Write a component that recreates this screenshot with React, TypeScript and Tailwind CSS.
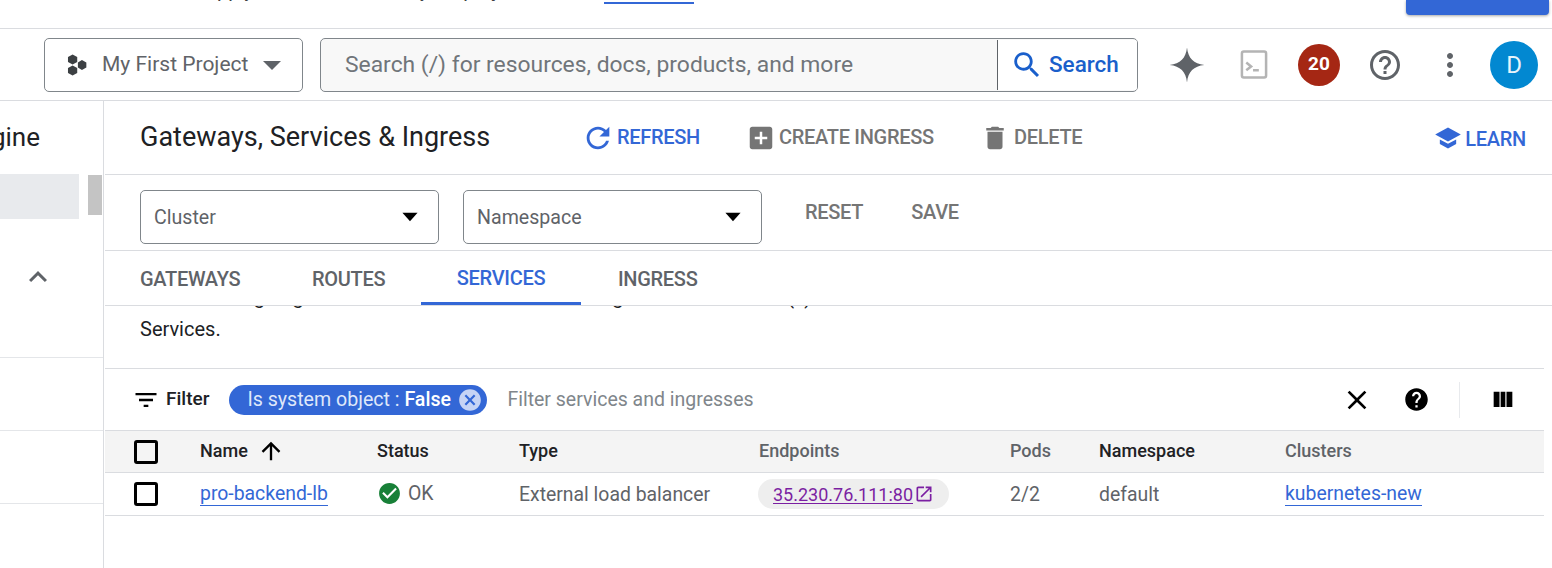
const font = { fontFamily: "Roboto, 'Liberation Sans', sans-serif" };

function Icon({ d, className }: { d: string; className: string }) {
	return (
		<svg viewBox="0 0 24 24" className={className} fill="currentColor">
			<path d={d} />
		</svg>
	);
}

const icons = {
	refresh: "M17.65 6.35C16.2 4.9 14.21 4 12 4c-4.42 0-7.99 3.58-7.99 8s3.57 8 7.99 8c3.73 0 6.84-2.55 7.73-6h-2.08c-.82 2.33-3.04 4-5.65 4-3.31 0-6-2.69-6-6s2.69-6 6-6c1.66 0 3.14.69 4.22 1.78L13 11h7V4l-2.35 2.35z",
	addBox: "M19 3H5c-1.11 0-2 .9-2 2v14c0 1.1.89 2 2 2h14c1.1 0 2-.9 2-2V5c0-1.1-.9-2-2-2zm-2 10h-4v4h-2v-4H7v-2h4V7h2v4h4v2z",
	trash: "M6 19c0 1.1.9 2 2 2h8c1.1 0 2-.9 2-2V7H6v12zM19 4h-3.5l-1-1h-5l-1 1H5v2h14V4z",
	school: "M5 13.18v4L12 21l7-3.82v-4L12 17l-7-3.82zM12 3L1 9l11 6 11-6-11-6z",
	search: "M15.5 14h-.79l-.28-.27C15.41 12.59 16 11.11 16 9.5 16 5.91 13.09 3 9.5 3S3 5.91 3 9.5 5.91 16 9.5 16c1.61 0 3.09-.59 4.23-1.57l.27.28v.79l5 4.99L20.49 19l-4.99-5zm-6 0C7.01 14 5 11.99 5 9.5S7.01 5 9.5 5 14 7.01 14 9.5 11.99 14 9.5 14z",
	helpOutline: "M11 18h2v-2h-2v2zm1-16C6.48 2 2 6.48 2 12s4.48 10 10 10 10-4.48 10-10S17.52 2 12 2zm0 18c-4.41 0-8-3.59-8-8s3.59-8 8-8 8 3.59 8 8-3.59 8-8 8zm0-14c-2.21 0-4 1.79-4 4h2c0-1.1.9-2 2-2s2 .9 2 2c0 2-3 1.75-3 5h2c0-2.25 3-2.5 3-5 0-2.21-1.79-4-4-4z",
	moreVert: "M12 8c1.1 0 2-.9 2-2s-.9-2-2-2-2 .9-2 2 .9 2 2 2zm0 2c-1.1 0-2 .9-2 2s.9 2 2 2 2-.9 2-2-.9-2-2-2zm0 6c-1.1 0-2 .9-2 2s.9 2 2 2 2-.9 2-2-.9-2-2-2z",
	filter: "M10 18h4v-2h-4v2zM3 6v2h18V6H3zm3 7h12v-2H6v2z",
	cancel: "M12 2C6.47 2 2 6.47 2 12s4.47 10 10 10 10-4.47 10-10S17.53 2 12 2zm5 13.59L15.59 17 12 13.41 8.41 17 7 15.59 10.59 12 7 8.41 8.41 7 12 10.59 15.59 7 17 8.41 13.41 12 17 15.59z",
	close: "M19 6.41L17.59 5 12 10.59 6.41 5 5 6.41 10.59 12 5 17.59 6.41 19 12 13.41 17.59 19 19 17.59 13.41 12z",
	help: "M12 2C6.48 2 2 6.48 2 12s4.48 10 10 10 10-4.48 10-10S17.52 2 12 2zm1 17h-2v-2h2v2zm2.07-7.75l-.9.92C13.45 12.9 13 13.5 13 15h-2v-.5c0-1.1.45-2.1 1.17-2.83l1.24-1.26c.37-.36.59-.86.59-1.41 0-1.1-.9-2-2-2s-2 .9-2 2H8c0-2.21 1.79-4 4-4s4 1.79 4 4c0 .88-.36 1.68-.93 2.25z",
	columns: "M10 18h4V5h-4v13zm-6 0h5V5H4v13zM15 5v13h5V5h-5z",
	arrowUp: "M4 12l1.41 1.41L11 7.83V20h2V7.83l5.58 5.59L20 12l-8-8-8 8z",
	checkCircle: "M12 2C6.48 2 2 6.48 2 12s4.48 10 10 10 10-4.48 10-10S17.52 2 12 2zm-2 15l-5-5 1.41-1.41L10 14.17l7.59-7.59L19 8l-9 9z",
	openNew: "M19 19H5V5h7V3H5c-1.11 0-2 .9-2 2v14c0 1.1.89 2 2 2h14c1.1 0 2-.9 2-2v-7h-2v7zM14 3v2h3.59l-9.83 9.83 1.41 1.41L19 6.41V10h2V3h-7z",
	dropDown: "M5 8l7 8 7-8z",
	bigDropDown: "M3 8h18l-9 9z",
	chevronUp: "M12 8l-6 6 1.41 1.41L12 10.83l4.59 4.58L18 14z",
	spark: "M12 1C12.7 7.8 16.2 11.3 23 12 16.2 12.7 12.7 16.2 12 23 11.3 16.2 7.8 12.7 1 12 7.8 11.3 11.3 7.8 12 1z",
};

function TopBar() {
	return (
		<div className="h-[29px] overflow-hidden border-b border-[#dadce0] flex items-start">
			<p className="ml-[204px] -mt-[22px] text-[20px] leading-[24px] text-[#3c4043] whitespace-nowrap w-[400px]">
				Apply the credit now for your project
			</p>
			<span className="block w-[90px] h-[2px] bg-[#3367d6] mt-[2px]"></span>
			<span className="ml-[712px] block w-[143px] h-[15px] bg-[#3367d6] rounded-b-[4px] shadow-[0_1px_3px_rgba(0,0,0,0.35)]"></span>
		</div>
	);
}

function Header() {
	return (
		<header className="h-[72px] border-b border-[#dadce0] flex items-center pl-[44px]">
			<button className="w-[259px] h-[54px] border border-[#80868b] rounded-[5px] flex items-center pl-[21px] text-[#5f6368]">
				<svg viewBox="0 0 20 20" className="w-[22px] h-[22px] shrink-0" fill="#3c4043">
					<polygon points="6,0.5 10.2,2.8 10.2,7.2 6,9.5 1.8,7.2 1.8,2.8" />
					<polygon points="6,10.5 10.2,12.8 10.2,17.2 6,19.5 1.8,17.2 1.8,12.8" />
					<polygon points="14.5,5.5 18.5,7.8 18.5,12.2 14.5,14.5 10.8,12.2 10.8,7.8" />
				</svg>
				<span className="ml-[14px] text-[21px] whitespace-nowrap">My First Project</span>
				<Icon d={icons.bigDropDown} className="w-[24px] h-[24px] ml-[12px] text-[#5f6368]" />
			</button>
			<div className="ml-[17px] w-[818px] h-[54px] border border-[#80868b] rounded-[5px] flex bg-[#f8f8f8] overflow-hidden">
				<div className="w-[676px] flex items-center pl-[24px] pt-[1px] text-[22.85px] text-[#70757a] whitespace-nowrap">
					Search (/) for resources, docs, products, and more
				</div>
				<div className="flex-1 bg-white border-l border-[#5f6368] my-[1px] flex items-center pl-[13px] text-[#1a5fcb]">
					<Icon d={icons.search} className="w-[34px] h-[34px] -ml-[1px]" />
					<span className="ml-[5px] text-[22.5px] font-medium">Search</span>
				</div>
			</div>
			<Icon d={icons.spark} className="ml-[30px] w-[38px] h-[38px] text-[#5f6368]" />
			<svg viewBox="0 0 28 30" className="ml-[34px] w-[28px] h-[29px]" fill="none" stroke="#b4b4b4" strokeWidth="2.6">
				<rect x="1.5" y="1.5" width="25" height="27" rx="2" />
				<path d="M6 13l5 4-5 4M13 21h6" />
			</svg>
			<span className="ml-[30px] w-[42px] h-[42px] rounded-full bg-[#a52714] text-white text-[19px] font-bold flex items-center justify-center">20</span>
			<Icon d={icons.helpOutline} className="ml-[27px] w-[36px] h-[36px] text-[#5f6368]" />
			<Icon d={icons.moreVert} className="ml-[29px] w-[36px] h-[36px] text-[#5f6368]" />
			<span className="ml-[22px] w-[48px] h-[48px] rounded-full bg-[#0288d1] text-[#e8f4fb] text-[24px] flex items-center justify-center">D</span>
		</header>
	);
}

function Sidebar() {
	return (
		<aside className="w-[104px] shrink-0 border-r border-[#dadce0] overflow-hidden">
			<div className="h-[73px] flex items-center justify-end pr-[63px] text-[26px] text-[#202124] whitespace-nowrap">
				<span>Engine</span>
			</div>
			<div className="h-[45px] flex">
				<div className="w-[79px] bg-[#e8eaed]"></div>
				<div className="ml-[9px] w-[14px] h-[40px] mt-px bg-[#c4c4c4]"></div>
			</div>
			<div className="h-[139px] border-b border-[#e4e6e9] pl-[20px] pt-[40px]">
				<Icon d={icons.chevronUp} className="w-[36px] h-[36px] text-[#5f6368]" />
			</div>
			<div className="h-[73px] border-b border-[#e4e6e9]"></div>
			<div className="h-[73px] border-b border-[#e4e6e9]"></div>
		</aside>
	);
}

function Action({ icon, label, className, iconClass }: { icon: string; label: string; className: string; iconClass: string }) {
	return (
		<div className={`flex items-center text-[20px] tracking-[-0.3px] font-medium whitespace-nowrap ${className}`}>
			<Icon d={icon} className={iconClass} />
			<span className="-mt-[2px]">{label}</span>
		</div>
	);
}

function TitleRow() {
	return (
		<div className="h-[74px] border-b border-[#dadce0] flex items-center pl-[35px] pr-[26px]">
			<h1 className="w-[441px] text-[27px] text-[#202124] whitespace-nowrap">Gateways, Services &amp; Ingress</h1>
			<Action icon={icons.refresh} label="REFRESH" className="text-[#3367d6] w-[168px]" iconClass="w-[34px] h-[34px] mr-[2px]" />
			<Action icon={icons.addBox} label="CREATE INGRESS" className="text-[#757575] w-[235px]" iconClass="w-[30px] h-[30px] -ml-[3px] mr-[3px]" />
			<Action icon={icons.trash} label="DELETE" className="text-[#757575]" iconClass="w-[30px] h-[30px] -ml-[4px] mr-[4px]" />
			<Action icon={icons.school} label="LEARN" className="text-[#3367d6] ml-auto mt-[4px]" iconClass="w-[28px] h-[28px] mr-[3px] -mt-[3px]" />
		</div>
	);
}

function Select({ label, className }: { label: string; className: string }) {
	return (
		<div className={`w-[299px] h-[54px] border border-[#80868b] rounded-[5px] flex items-center pl-[13px] pr-[15px] justify-between ${className}`}>
			<span className="mt-[2px] text-[19.6px] text-[#5f6368]">{label}</span>
			<Icon d={icons.dropDown} className="w-[26px] h-[26px] text-black" />
		</div>
	);
}

function FilterRow() {
	return (
		<div className="h-[76px] border-b border-[#dadce0] flex pl-[35px] pt-[15px]">
			<Select label="Cluster" className="" />
			<Select label="Namespace" className="ml-[24px]" />
			<span className="ml-[43px] mt-[7px] text-[20px] tracking-[-0.3px] font-medium text-[#757575]">RESET</span>
			<span className="ml-[48px] mt-[7px] text-[20px] tracking-[-0.3px] font-medium text-[#757575]">SAVE</span>
		</div>
	);
}

function Tabs() {
	const tabs = [
		{ label: "GATEWAYS", className: "w-[171px] pl-[35px] text-[#5f6368]" },
		{ label: "ROUTES", className: "w-[145px] pl-[36px] text-[#5f6368]" },
		{ label: "SERVICES", className: "w-[160px] justify-center text-[#3367d6] border-b-[3px] border-[#3367d6]" },
		{ label: "INGRESS", className: "pl-[37px] text-[#5f6368]" },
	];
	return (
		<div className="h-[55px] border-b border-[#dadce0] flex">
			{tabs.map((tab) => (
				<div key={tab.label} className={`flex items-center h-[54px] pt-[2px] text-[20px] tracking-[-0.3px] font-medium ${tab.className}`}>
					{tab.label}
				</div>
			))}
		</div>
	);
}

function Description() {
	return (
		<div className="h-[63px] overflow-hidden border-b border-[#dadce0] mr-[8px] pl-[35px] text-[20px] leading-[28px] text-[#202124]">
			<p className="-mt-[23px] whitespace-nowrap">Use of routing to guide traffic to all the backends using the Kube backend(s)</p>
			<p className="mt-[4px]">Services.</p>
		</div>
	);
}

function FilterBar() {
	return (
		<div className="h-[61px] flex items-center pl-[27px] mr-[8px]">
			<Icon d={icons.filter} className="w-[28px] h-[28px] text-black" />
			<span className="ml-[6px] text-[19px] font-medium text-[#202124]">Filter</span>
			<div className="ml-[20px] h-[30px] w-[258px] rounded-full bg-[#3367d6] text-[19.6px] flex items-center pl-[18px] text-[#dfe7fa] whitespace-nowrap">
				<span>Is system object :&nbsp;</span>
				<span className="font-medium text-white">False</span>
				<Icon d={icons.cancel} className="ml-[6px] w-[26px] h-[26px] text-[#c6d4f5]" />
			</div>
			<span className="ml-[20px] text-[19.5px] text-[#80868b] whitespace-nowrap">Filter services and ingresses</span>
			<Icon d={icons.close} className="ml-auto w-[32px] h-[32px] text-black" />
			<Icon d={icons.help} className="ml-[30px] w-[27px] h-[27px] text-black" />
			<div className="ml-[29px] w-px h-[36px] bg-[#e8eaed]"></div>
			<Icon d={icons.columns} className="ml-[29px] mr-[27px] w-[28px] h-[28px] text-black" />
		</div>
	);
}

function Checkbox() {
	return <span className="block w-[24px] h-[24px] border-[3px] border-black rounded-[3px]"></span>;
}

function Table() {
	const cols = "grid grid-cols-[66px_177px_142px_240px_251px_89px_186px_1fr] items-center pl-[29px] mr-[8px]";
	return (
		<div>
			<div className={`${cols} h-[43px] bg-[#f4f4f4] border-y border-[#dadce0] text-[18px] font-medium text-[#202124]`}>
				<Checkbox />
				<div className="flex items-center -mt-[2px]">
					Name
					<Icon d={icons.arrowUp} className="ml-[9px] w-[28px] h-[28px] text-black" />
				</div>
				<span className="-mt-[2px]">Status</span>
				<span className="-mt-[2px]">Type</span>
				<span className="-mt-[2px] text-[#5f6368]">Endpoints</span>
				<span className="-mt-[2px] text-[#5f6368]">Pods</span>
				<span className="-mt-[2px]">Namespace</span>
				<span className="-mt-[2px] text-[#5f6368]">Clusters</span>
			</div>
			<div className={`${cols} h-[43px] border-b border-[#dadce0] text-[19.4px] text-[#5f6368]`}>
				<Checkbox />
				<span className="justify-self-start text-[#3367d6] border-b border-[#3367d6] leading-[23px]">pro-backend-lb</span>
				<div className="flex items-center">
					<Icon d={icons.checkCircle} className="w-[25px] h-[25px] text-[#188038]" />
					<span className="ml-[6px]">OK</span>
				</div>
				<span className="mt-[1px] whitespace-nowrap">External load balancer</span>
				<div className="justify-self-start -ml-px h-[30px] w-[191px] rounded-full bg-[#eeeeee] flex items-center pl-[15px] text-[#7b1fa2] text-[18px]">
					<span className="underline underline-offset-2">35.230.76.111:80</span>
					<Icon d={icons.openNew} className="ml-[1px] w-[20px] h-[20px]" />
				</div>
				<span className="mt-[1px]">2/2</span>
				<span className="mt-[1px]">default</span>
				<span className="justify-self-start text-[#3367d6] border-b border-[#3367d6] leading-[23px]">kubernetes-new</span>
			</div>
		</div>
	);
}

export default function App() {
	return (
		<div className="w-[1552px] h-[568px] overflow-hidden bg-white flex flex-col" style={font}>
			<TopBar />
			<Header />
			<div className="flex flex-1 min-h-0">
				<Sidebar />
				<main className="flex-1 min-w-0 ml-px">
					<TitleRow />
					<FilterRow />
					<Tabs />
					<Description />
					<FilterBar />
					<Table />
				</main>
			</div>
		</div>
	);
}
